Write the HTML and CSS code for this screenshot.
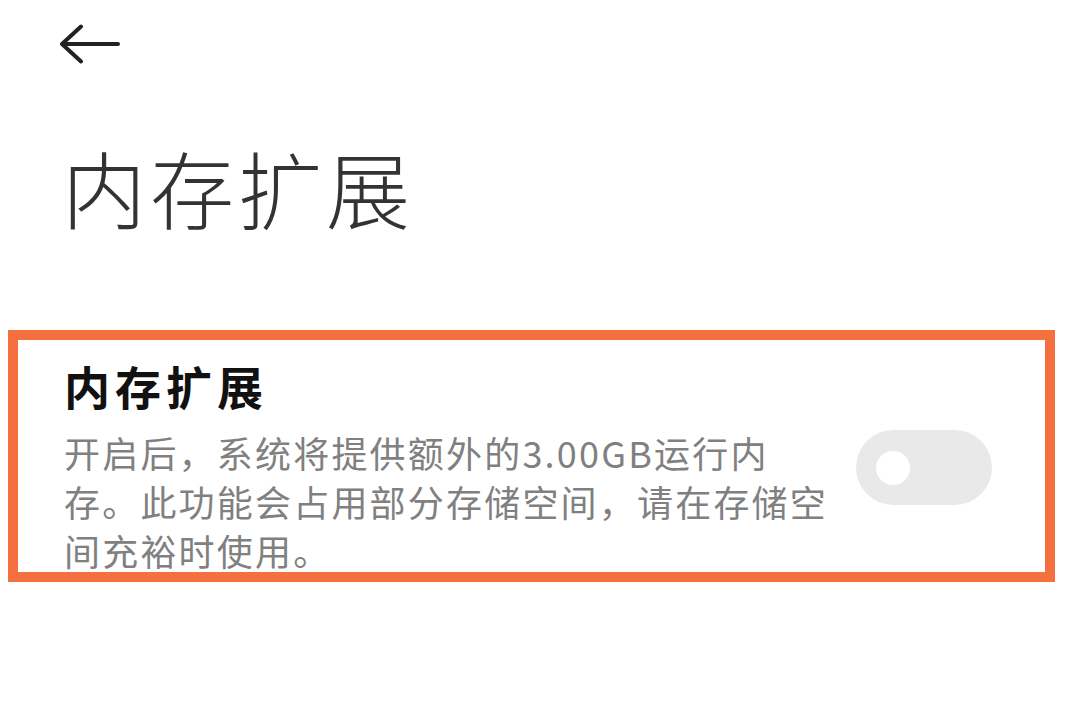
FILE: index.html
```html
<!DOCTYPE html>
<html lang="zh-CN">
<head>
  <meta charset="UTF-8">
  <meta name="viewport" content="width=device-width, initial-scale=1.0">
  <title>内存扩展</title>
  <link rel="stylesheet" href="styles.css">
</head>
<body>
  <!-- 顶部返回 -->
  <header class="top-bar">
    <svg class="back-icon" width="60" height="44" viewBox="0 0 60 44" fill="none">
      <path d="M2 22H58M21 4.5L2 22L21 39.5" stroke="#222" stroke-width="4" stroke-linecap="round" stroke-linejoin="round"/>
    </svg>
  </header>

  <h1 class="page-title">内存扩展</h1>

  <!-- 设置项 -->
  <section class="setting-card">
    <div class="setting-text">
      <h2>内存扩展</h2>
      <p>开启后，系统将提供额外的3.00GB运行内存。此功能会占用部分存储空间，请在存储空间充裕时使用。</p>
    </div>
    <div class="switch">
      <span class="switch-knob"></span>
    </div>
  </section>
</body>
</html>
```

FILE: styles.css
```css
* {
  box-sizing: border-box;
  margin: 0;
  padding: 0;
}

body {
  font-family: "Noto Sans CJK SC", "Noto Sans", sans-serif;
  background: #fff;
  color: #222;
  width: 1075px;
  height: 702px;
  overflow: hidden;
}

.top-bar {
  padding: 22px 0 0 60px;
  height: 66px;
}

.back-icon {
  display: block;
}

.page-title {
  margin: 79px 0 0 62px;
  font-size: 84px;
  font-weight: 300;
  line-height: 1;
  letter-spacing: 4px;
  color: #333;
}

.setting-card {
  margin: 101px 0 0 8px;
  width: 1047px;
  height: 252px;
  border: 10px solid #f4703f;
  padding: 22px 0 0 46px;
  display: flex;
  align-items: flex-start;
  overflow: hidden;
}

.setting-text {
  width: 768px;
}

.setting-text h2 {
  font-size: 46px;
  font-weight: 700;
  line-height: 1;
  letter-spacing: 5px;
  color: #111;
}

.setting-text p {
  margin-top: 20px;
  font-size: 36px;
  line-height: 49px;
  letter-spacing: 2.2px;
  color: #808080;
}

.switch {
  margin: 68px 0 0 24px;
  width: 136px;
  height: 75px;
  border-radius: 38px;
  background: #e9e9e9;
  display: flex;
  align-items: center;
  padding-left: 20px;
  flex-shrink: 0;
}

.switch-knob {
  width: 34px;
  height: 34px;
  border-radius: 50%;
  background: #fff;
}
```
